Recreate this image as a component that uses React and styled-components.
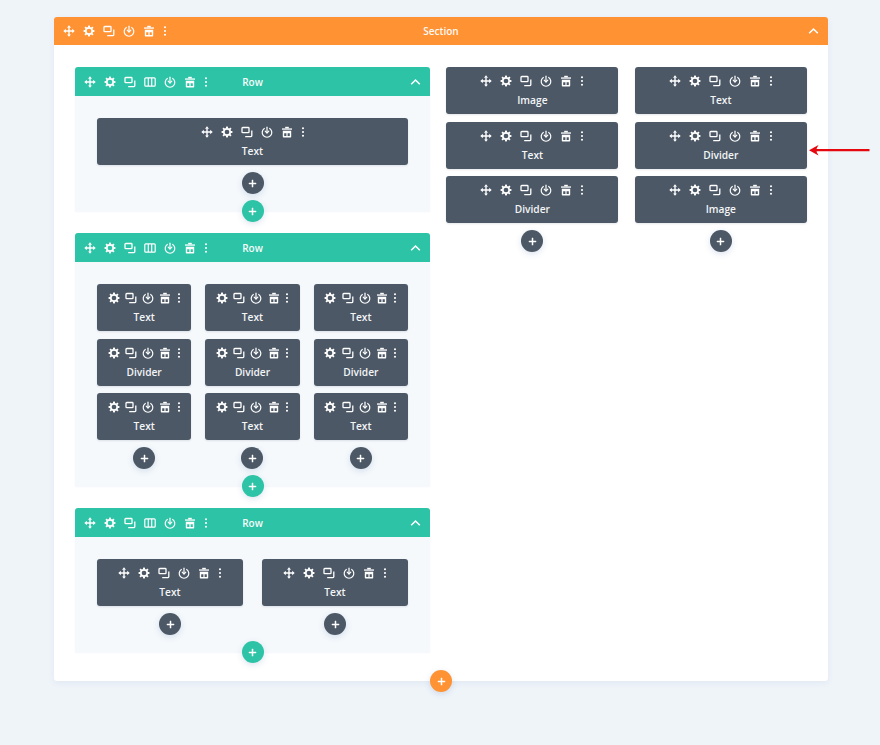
import React from "react";
import styled, { createGlobalStyle } from "styled-components";

const Global = createGlobalStyle`
  html, body { margin: 0; padding: 0; background: #eff4f9; }
  body { font-family: "Open Sans", "Noto Sans", sans-serif; overflow: hidden; }
`;

const Page = styled.div`
  position: relative;
  height: 745px;
  padding: 17px 52px 0 54px;
  box-sizing: border-box;
`;

const Section = styled.section`
  position: relative;
  background: #fff;
  border-radius: 3px;
  height: 664px;
  box-shadow: 0 2px 6px rgba(43, 87, 151, 0.07);
`;

const Bar = styled.header`
  display: grid;
  grid-template-columns: 1fr auto 1fr;
  align-items: center;
  height: ${(p) => (p.$kind === "section" ? 28 : 29)}px;
  padding: 0 9px;
  border-radius: 3px 3px 0 0;
  background: ${(p) => (p.$kind === "section" ? "#ff9233" : "#2dc3a6")};
  color: #fff;
  box-sizing: border-box;
`;

const BarTitle = styled.span`
  font-size: 10px;
  font-weight: 600;
  line-height: 1;
  color: #fff;
  opacity: 0.95;
`;

const Chevron = styled.svg`
  justify-self: end;
  width: 11px;
  height: 8px;
`;

const IconRow = styled.div`
  display: flex;
  align-items: center;
  gap: ${(p) => (p.$compact ? 5.3 : 8)}px;
`;

const Columns = styled.div`
  display: grid;
  grid-template-columns: 355px 172px 172px;
  column-gap: 16.4px;
  padding: 22px 22px 0 21px;
  align-items: start;
`;

const LeftColumn = styled.div`
  display: flex;
  flex-direction: column;
  gap: 22.5px;
`;

const Column = styled.div`
  display: flex;
  flex-direction: column;
  align-items: stretch;
`;

const ModuleStack = styled.div`
  display: flex;
  flex-direction: column;
  gap: 7.6px;
`;

const Row = styled.article`
  position: relative;
  background: #f5f9fc;
  border-radius: 3px 3px 0 0;
  box-shadow: 0 1px 2px rgba(43, 87, 151, 0.05);
`;

const RowBody = styled.div`
  display: grid;
  grid-template-columns: repeat(${(p) => p.$cols}, 1fr);
  column-gap: ${(p) => (p.$cols === 2 ? 19 : 14)}px;
  padding: 22px 22px 16.5px;
`;

const Module = styled.div`
  height: 47px;
  background: #4c5866;
  border-radius: 3px;
  display: flex;
  flex-direction: column;
  align-items: center;
  padding-top: 8px;
  box-sizing: border-box;
  box-shadow: 0 1px 2px rgba(43, 60, 90, 0.12);
`;

const ModuleLabel = styled.span`
  margin-top: 6.2px;
  font-size: 10.2px;
  line-height: 15px;
  font-weight: 600;
  color: #f3f5f7;
`;

const Plus = styled.button`
  display: flex;
  align-items: center;
  justify-content: center;
  width: 22px;
  height: 22px;
  padding: 0;
  border: 0;
  border-radius: 50%;
  background: ${(p) => p.$bg};
  box-shadow: 0 2px 6px rgba(43, 87, 151, 0.16);
`;

const DarkPlus = styled(Plus)`
  margin: 7px auto 0;
`;

const EdgePlus = styled(Plus)`
  position: absolute;
  left: 50%;
  bottom: ${(p) => p.$drop}px;
  transform: translateX(-50%);
  z-index: 2;
`;

const Annotation = styled.svg`
  position: absolute;
  left: 806px;
  top: 143px;
  width: 66px;
  height: 14px;
`;

const Move = () => (
  <svg width="12" height="12" viewBox="0 0 12 12" fill="#fff">
    <path d="M5.3 2.6h1.4v2.7h2.5V3.8L11.7 6 9.2 8.2V6.7H6.7v2.7h1.2L6 11.7 4.1 9.4h1.2V6.7H2.8v1.5L.3 6l2.5-2.2v1.5h2.5z" />
    <path d="M6 .3l2 2.5H4z" />
  </svg>
);

const Gear = () => (
  <svg width="12" height="12" viewBox="0 0 12 12">
    <circle cx="6" cy="6" r="3.2" fill="none" stroke="#fff" strokeWidth="1.7" />
    <g fill="#fff">
      <rect x="5" y="0.6" width="2" height="1.8" />
      <rect x="5" y="9.6" width="2" height="1.8" />
      <rect x="0.6" y="5" width="1.8" height="2" />
      <rect x="9.6" y="5" width="1.8" height="2" />
      <rect x="1.8" y="1.8" width="1.8" height="1.8" transform="rotate(45 2.7 2.7)" />
      <rect x="8.4" y="1.8" width="1.8" height="1.8" transform="rotate(45 9.3 2.7)" />
      <rect x="1.8" y="8.4" width="1.8" height="1.8" transform="rotate(45 2.7 9.3)" />
      <rect x="8.4" y="8.4" width="1.8" height="1.8" transform="rotate(45 9.3 9.3)" />
    </g>
  </svg>
);

const Copy = () => (
  <svg width="12" height="12" viewBox="0 0 12 12" fill="none" stroke="#fff" strokeWidth="1.3">
    <rect x="1" y="1.5" width="7" height="5.2" rx="0.8" />
    <path d="M10.8 4.4v5.4a.8.8 0 0 1-.8.8H4.2" />
  </svg>
);

const Power = () => (
  <svg width="12" height="12" viewBox="0 0 12 12" fill="none" stroke="#fff" strokeWidth="1.2" strokeLinecap="round">
    <path d="M3.3 2.5a4.8 4.8 0 1 0 5.4 0" />
    <path d="M6 1.2v5.4" />
    <path d="M4.2 5.2L6 7l1.8-1.8" strokeLinejoin="round" />
  </svg>
);

const Trash = () => (
  <svg width="12" height="12" viewBox="0 0 12 12" fill="#fff">
    <rect x="1" y="2.4" width="10" height="1.3" />
    <rect x="4.2" y="0.8" width="3.6" height="1.6" />
    <path fillRule="evenodd" d="M1.8 4.7h8.4v6a.7.7 0 0 1-.7.7h-7a.7.7 0 0 1-.7-.7zM3.2 7.2v2.8h2.2V7.2zm3.4 0v2.8h2.2V7.2z" />
  </svg>
);

const Cols = () => (
  <svg width="12" height="12" viewBox="0 0 12 12" fill="none" stroke="#fff" strokeWidth="1.2">
    <rect x="0.8" y="1.8" width="10.4" height="8.4" rx="1" />
    <path d="M4.3 2v8M7.7 2v8" />
  </svg>
);

const Dots = () => (
  <svg width="4" height="12" viewBox="0 0 4 12" fill="#fff">
    <circle cx="2" cy="2.2" r="1.05" />
    <circle cx="2" cy="6" r="1.05" />
    <circle cx="2" cy="9.8" r="1.05" />
  </svg>
);

const PlusGlyph = () => (
  <svg width="9" height="9" viewBox="0 0 9 9" fill="#fff">
    <rect x="3.75" y="0.7" width="1.5" height="7.6" rx="0.4" />
    <rect x="0.7" y="3.75" width="7.6" height="1.5" rx="0.4" />
  </svg>
);

const Tools = ({ compact, columns }) => (
  <IconRow $compact={compact}>
    {!compact && <Move />}
    <Gear />
    <Copy />
    {columns && <Cols />}
    <Power />
    <Trash />
    <Dots />
  </IconRow>
);

const ModuleCard = ({ label, compact }) => (
  <Module>
    <Tools compact={compact} />
    <ModuleLabel>{label}</ModuleLabel>
  </Module>
);

const HeaderBar = ({ kind, title }) => (
  <Bar $kind={kind}>
    <Tools columns={kind === "row"} />
    <BarTitle>{title}</BarTitle>
    <Chevron viewBox="0 0 11 8" fill="none" stroke="#fff" strokeWidth="1.6">
      <path d="M1.2 6.2L5.5 2l4.3 4.2" />
    </Chevron>
  </Bar>
);

const ModuleColumn = ({ items, compact }) => (
  <Column>
    <ModuleStack>
      {items.map((t, i) => (
        <ModuleCard key={i} label={t} compact={compact} />
      ))}
    </ModuleStack>
    <DarkPlus $bg="#4c5866"><PlusGlyph /></DarkPlus>
  </Column>
);

const BuilderRow = ({ columns, compact }) => (
  <Row>
    <HeaderBar kind="row" title="Row" />
    <RowBody $cols={columns.length}>
      {columns.map((c, i) => (
        <ModuleColumn key={i} items={c} compact={compact} />
      ))}
    </RowBody>
    <EdgePlus $bg="#2dc3a6" $drop={-11.5}><PlusGlyph /></EdgePlus>
  </Row>
);

const triple = ["Text", "Divider", "Text"];

export default function App() {
  return (
    <Page>
      <Global />
      <Section>
        <HeaderBar kind="section" title="Section" />
        <Columns>
          <LeftColumn>
            <BuilderRow columns={[["Text"]]} />
            <BuilderRow compact columns={[triple, triple, triple]} />
            <BuilderRow columns={[["Text"], ["Text"]]} />
          </LeftColumn>
          <ModuleColumn items={["Image", "Text", "Divider"]} />
          <ModuleColumn items={["Text", "Divider", "Image"]} />
        </Columns>
        <EdgePlus $bg="#ff9233" $drop={-11}><PlusGlyph /></EdgePlus>
      </Section>
      <Annotation viewBox="0 0 66 14">
        <path d="M63.5 6.1H11.5c-.8 0-1.2-.3-.6-1.2L12.5 2 3 7.2l9.5 5.2-1.6-3c-.6-.9-.2-1.2.6-1.2H63.5z" fill="#e5090f" />
      </Annotation>
    </Page>
  );
}
